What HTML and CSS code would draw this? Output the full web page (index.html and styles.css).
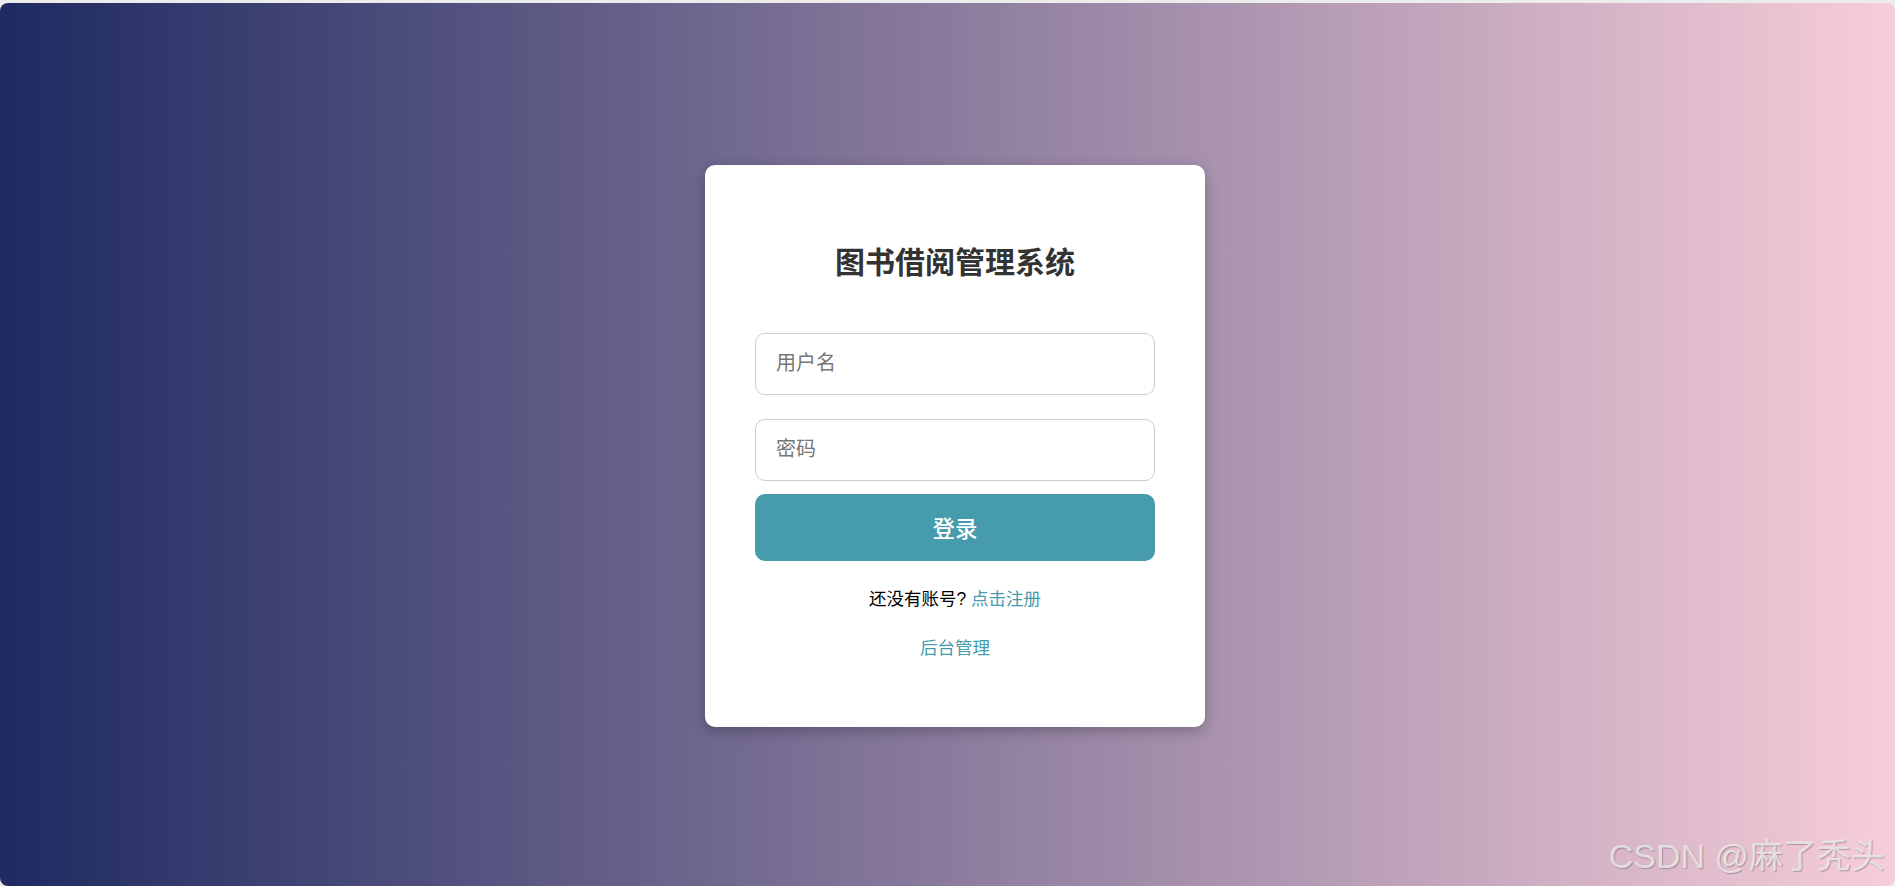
FILE: index.html
```html
<!DOCTYPE html>
<html lang="zh-CN">
<head>
    <meta charset="UTF-8">
    <meta name="viewport" content="width=device-width, initial-scale=1.0">
    <title>图书借阅管理系统</title>
    <link rel="stylesheet" href="styles.css">
</head>
<body>
    <div class="page">
        <div class="login-box">
            <h2 class="title">图书借阅管理系统</h2>
            <form class="login-form" onsubmit="return false;">
                <input class="field" type="text" placeholder="用户名">
                <input class="field" type="password" placeholder="密码">
                <button class="btn" type="submit">登录</button>
            </form>
            <p class="register">还没有账号? <a href="#">点击注册</a></p>
            <p class="admin"><a href="#">后台管理</a></p>
        </div>
        <div class="watermark">CSDN @麻了秃头</div>
    </div>
</body>
</html>
```

FILE: styles.css
```css
body {
    margin: 0;
    padding-top: 3px;
    height: 100vh;
    box-sizing: border-box;
    background: #ececec;
    font-family: "Liberation Sans", "Noto Sans CJK SC", sans-serif;
    overflow: hidden;
}

.page {
    position: relative;
    height: 100%;
    box-sizing: border-box;
    padding: 2px 0 0 15px;
    display: flex;
    justify-content: center;
    align-items: center;
    border-radius: 8px;
    background: linear-gradient(to right, #1e2a61, #f7cdd9);
}

.login-box {
    width: 400px;
    padding: 50px 50px 66px;
    background: #fff;
    border-radius: 10px;
    box-shadow: 0 4px 14px rgba(0, 0, 0, 0.25);
    text-align: center;
}

.title {
    margin: 25px 0 48px;
    font-size: 30px;
    line-height: 45px;
    font-weight: bold;
    color: #333;
}

.login-form {
    display: flex;
    flex-direction: column;
}

.field {
    height: 62px;
    padding: 0 20px;
    margin-bottom: 24px;
    border: 1px solid #ccc;
    border-radius: 10px;
    box-sizing: border-box;
    font-family: inherit;
    font-size: 20px;
    color: #333;
    outline: none;
}

.field:last-of-type {
    margin-bottom: 13px;
}

.field::placeholder {
    color: #777;
}

.btn {
    height: 67px;
    border: none;
    border-radius: 10px;
    background: #469bad;
    color: #fff;
    font-family: inherit;
    font-size: 22.5px;
    font-weight: 500;
    cursor: pointer;
}

.register,
.admin {
    margin: 0;
    font-size: 17.5px;
    line-height: 26px;
    color: #000;
}

.register {
    margin-top: 25px;
}

.admin {
    margin-top: 23px;
}

a {
    color: #469bad;
    text-decoration: none;
}

.watermark {
    position: absolute;
    right: 10px;
    bottom: 13px;
    font-size: 34px;
    line-height: 1;
    color: rgba(235, 235, 235, 0.85);
    text-shadow: 1px 1px 1px rgba(0, 0, 0, 0.25);
}
```
